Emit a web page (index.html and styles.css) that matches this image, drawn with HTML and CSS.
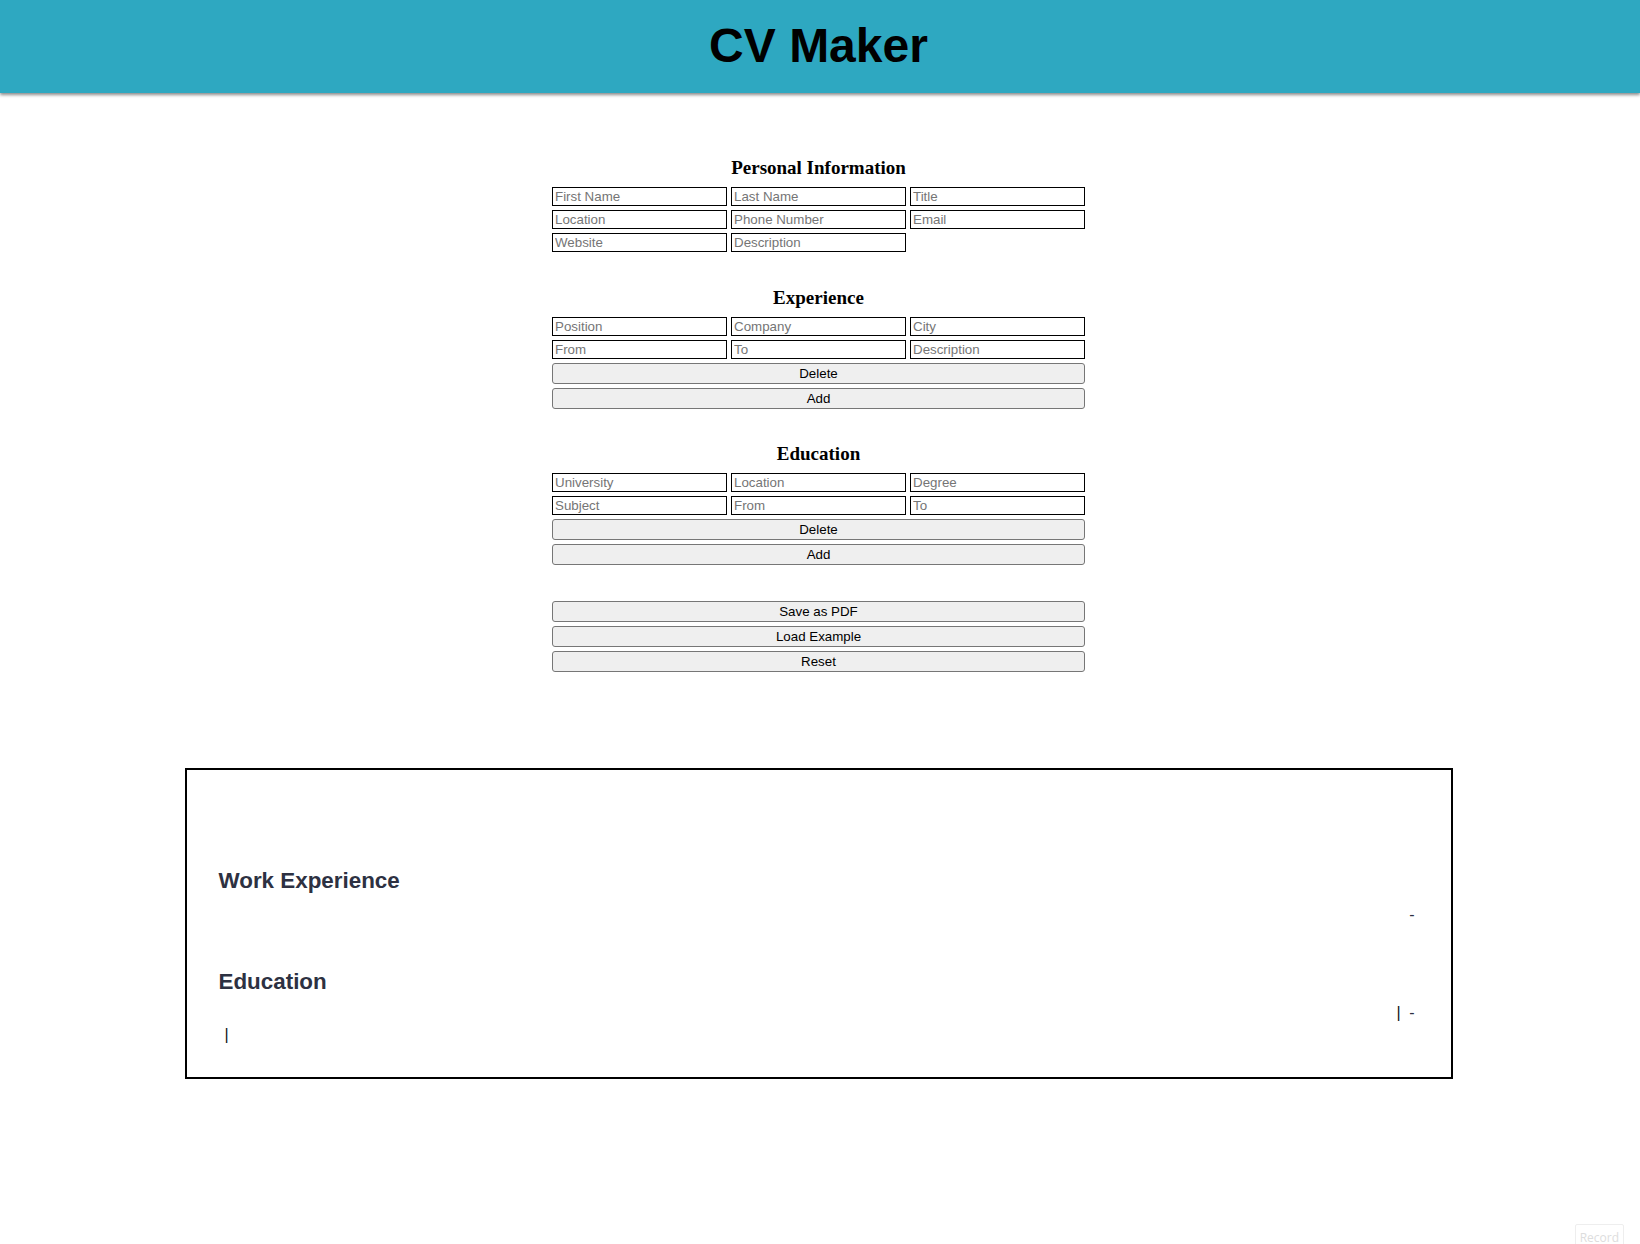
FILE: index.html
```html
<!DOCTYPE html>
<html lang="en">
<head>
<meta charset="utf-8">
<title>CV Maker</title>
<link rel="stylesheet" href="styles.css">
</head>
<body>
<header class="topbar">
  <h1 class="brand">CV Maker</h1>
</header>
<main class="page">
  <form class="editor">
    <section class="block block-first">
      <h3 class="block-title">Personal Information</h3>
      <div class="fields">
        <input class="field" type="text" placeholder="First Name">
        <input class="field" type="text" placeholder="Last Name">
        <input class="field" type="text" placeholder="Title">
        <input class="field" type="text" placeholder="Location">
        <input class="field" type="text" placeholder="Phone Number">
        <input class="field" type="text" placeholder="Email">
        <input class="field" type="text" placeholder="Website">
        <input class="field" type="text" placeholder="Description">
      </div>
    </section>
    <section class="block">
      <h3 class="block-title">Experience</h3>
      <div class="fields">
        <input class="field" type="text" placeholder="Position">
        <input class="field" type="text" placeholder="Company">
        <input class="field" type="text" placeholder="City">
        <input class="field" type="text" placeholder="From">
        <input class="field" type="text" placeholder="To">
        <input class="field" type="text" placeholder="Description">
      </div>
      <button class="btn" type="button">Delete</button>
      <button class="btn" type="button">Add</button>
    </section>
    <section class="block">
      <h3 class="block-title">Education</h3>
      <div class="fields">
        <input class="field" type="text" placeholder="University">
        <input class="field" type="text" placeholder="Location">
        <input class="field" type="text" placeholder="Degree">
        <input class="field" type="text" placeholder="Subject">
        <input class="field" type="text" placeholder="From">
        <input class="field" type="text" placeholder="To">
      </div>
      <button class="btn" type="button">Delete</button>
      <button class="btn" type="button">Add</button>
    </section>
    <section class="block">
      <button class="btn" type="button">Save as PDF</button>
      <button class="btn" type="button">Load Example</button>
      <button class="btn" type="button">Reset</button>
    </section>
  </form>

  <section class="cv">
    <h2 class="cv-title">Work Experience</h2>
    <div class="cv-item cv-item-work">
      <div class="cv-main"></div>
      <div class="cv-dates"><span class="cv-dash">-</span></div>
    </div>
    <h2 class="cv-title cv-title-edu">Education</h2>
    <div class="cv-item cv-item-edu">
      <div class="cv-main cv-main-edu"><span class="cv-bar cv-bar-left">|</span></div>
      <div class="cv-dates"><span class="cv-bar">|</span><span class="cv-dash cv-dash-gap">-</span></div>
    </div>
  </section>
</main>
<div class="rec">Record</div>
</body>
</html>
```

FILE: styles.css
```css
html, body {
  margin: 0;
  padding: 0;
  background: #fff;
}

body {
  font-family: "Liberation Serif", "Times New Roman", serif;
  color: #000;
}

.topbar {
  height: 93px;
  box-sizing: border-box;
  background: #2ea8c1;
  padding: 18px 3px 0 0;
  box-shadow: 0 2px 3px rgba(0, 0, 0, 0.45);
  position: relative;
}

.brand {
  margin: 0;
  text-align: center;
  font-family: "Liberation Sans", Arial, sans-serif;
  font-weight: bold;
  font-size: 48px;
  line-height: 55px;
  color: #000;
}

.page {
  padding-right: 3px;
}

.editor {
  width: 533px;
  margin: 64px auto 0;
  display: flex;
  flex-direction: column;
  gap: 36px;
}

.block {
  display: flex;
  flex-direction: column;
  gap: 4px;
}

.block-first {
  margin-bottom: 1px;
}

.block-title {
  margin: 0 0 5px;
  text-align: center;
  font-family: "Liberation Serif", "Times New Roman", serif;
  font-weight: bold;
  font-size: 19px;
  line-height: 21px;
}

.block + .block .block-title {
  margin-top: -2px;
}

.fields {
  display: grid;
  grid-template-columns: repeat(3, 175px);
  column-gap: 4px;
  row-gap: 4px;
}

.field {
  box-sizing: border-box;
  height: 19px;
  margin: 0;
  padding: 1px 2px;
  border: 1px solid #000;
  border-radius: 0;
  font-family: "Liberation Sans", Arial, sans-serif;
  font-size: 13.333px;
  line-height: 15px;
  background: #fff;
  color: #000;
  outline: none;
}

.field::placeholder {
  color: #757575;
  opacity: 1;
}

.btn {
  appearance: none;
  box-sizing: border-box;
  width: 100%;
  height: 21px;
  margin: 0;
  padding: 2px 6px;
  border: 1px solid #767676;
  border-radius: 3px;
  background: #efefef;
  font-family: "Liberation Sans", Arial, sans-serif;
  font-size: 13.333px;
  line-height: 15px;
  color: #000;
  text-align: center;
}

.cv {
  box-sizing: border-box;
  width: 1268px;
  height: 311px;
  margin: 96px auto 0;
  border: 2px solid #000;
  padding: 97.5px 36px 0 32px;
  font-family: "Liberation Sans", Arial, sans-serif;
  color: #2d3142;
}

.cv-title {
  margin: 0;
  font-size: 22.4px;
  line-height: 25px;
  font-weight: bold;
  color: #2d3142;
}

.cv-title-edu {
  margin-top: 45px;
}

.cv-item {
  display: flex;
  justify-content: space-between;
  align-items: flex-start;
  font-size: 16px;
  line-height: 18px;
}

.cv-item-work {
  margin-top: 13.5px;
}

.cv-item-edu {
  margin-top: 9.5px;
}

.cv-main-edu {
  padding-top: 22.5px;
}

.cv-dates {
  display: flex;
  align-items: baseline;
}

.cv-bar {
  color: #111;
}

.cv-bar-left {
  margin-left: 6px;
}

.cv-dash-gap {
  margin-left: 8.6px;
}

.rec {
  position: fixed;
  right: 16px;
  bottom: -6px;
  height: 24px;
  padding: 0 4px;
  border: 1px solid #eeeeee;
  border-radius: 2px;
  font-family: "Open Sans", sans-serif;
  font-size: 12px;
  line-height: 26px;
  color: #dddddd;
  background: #fff;
}
```
